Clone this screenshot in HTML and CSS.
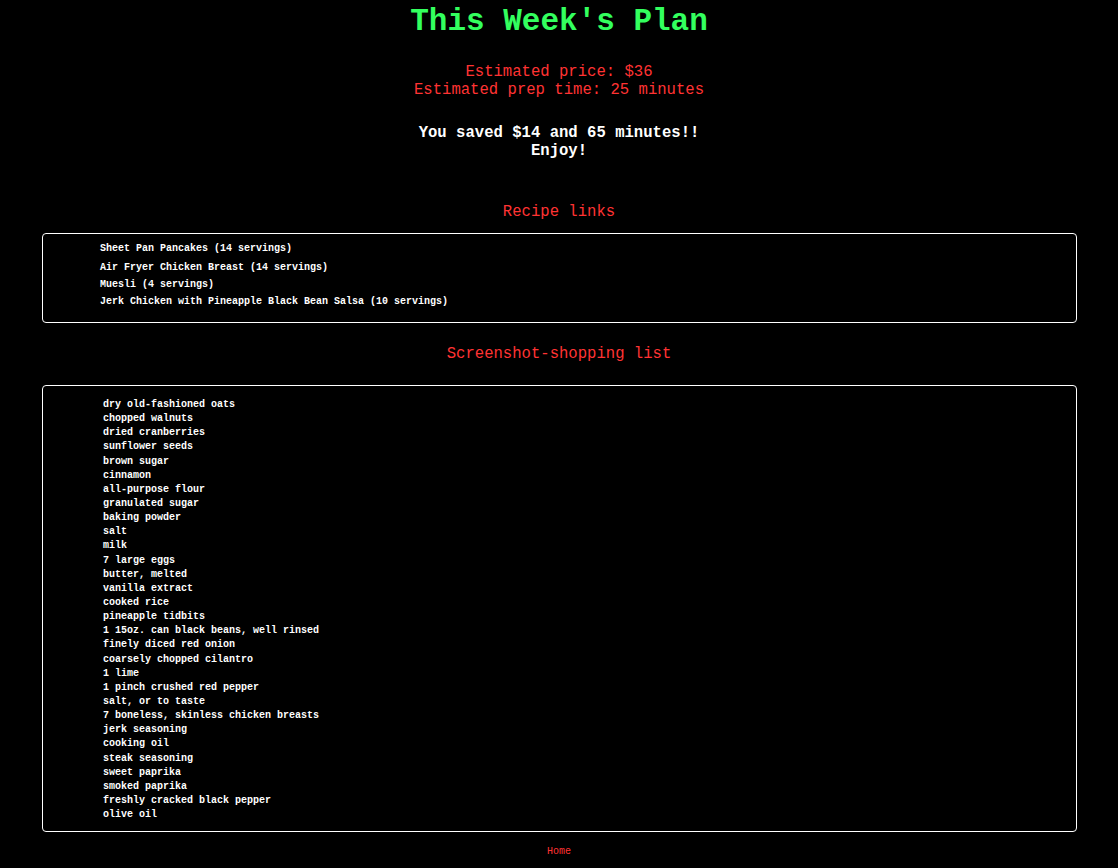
FILE: index.html
```html
<!DOCTYPE html>
<html lang="en">
<head>
<meta charset="utf-8">
<title>This Week's Plan</title>
<link rel="stylesheet" href="styles.css">
</head>
<body>
<h1 class="title">This Week's Plan</h1>
<div class="estimates">
  <div>Estimated price: $36</div>
  <div>Estimated prep time: 25 minutes</div>
</div>
<div class="saved">
  <div>You saved $14 and 65 minutes!!</div>
  <div>Enjoy!</div>
</div>
<h2 class="section-title recipes-title">Recipe links</h2>
<div class="box recipes">
  <ul class="recipe-list">
    <li><a href="#">Sheet Pan Pancakes (14 servings)</a></li>
    <li><a href="#">Air Fryer Chicken Breast (14 servings)</a></li>
    <li><a href="#">Muesli (4 servings)</a></li>
    <li><a href="#">Jerk Chicken with Pineapple Black Bean Salsa (10 servings)</a></li>
  </ul>
</div>
<h2 class="section-title shopping-title">Screenshot-shopping list</h2>
<div class="box shopping">
  <ul class="shopping-list">
    <li>dry old-fashioned oats</li>
    <li>chopped walnuts</li>
    <li>dried cranberries</li>
    <li>sunflower seeds</li>
    <li>brown sugar</li>
    <li>cinnamon</li>
    <li>all-purpose flour</li>
    <li>granulated sugar</li>
    <li>baking powder</li>
    <li>salt</li>
    <li>milk</li>
    <li>7 large eggs</li>
    <li>butter, melted</li>
    <li>vanilla extract</li>
    <li>cooked rice</li>
    <li>pineapple tidbits</li>
    <li>1 15oz. can black beans, well rinsed</li>
    <li>finely diced red onion</li>
    <li>coarsely chopped cilantro</li>
    <li>1 lime</li>
    <li>1 pinch crushed red pepper</li>
    <li>salt, or to taste</li>
    <li>7 boneless, skinless chicken breasts</li>
    <li>jerk seasoning</li>
    <li>cooking oil</li>
    <li>steak seasoning</li>
    <li>sweet paprika</li>
    <li>smoked paprika</li>
    <li>freshly cracked black pepper</li>
    <li>olive oil</li>
  </ul>
</div>
<footer class="footer"><a href="#" class="home-link">Home</a></footer>
</body>
</html>
```
FILE: styles.css
```css
html, body {
  background: #000;
}
body {
  margin: 0;
  font-family: "Liberation Mono", "Courier New", monospace;
  color: #fff;
  text-align: center;
}
.title {
  margin: 4px 0 0;
  font-size: 31px;
  line-height: 36px;
  font-weight: bold;
  color: #33ff5e;
}
.estimates {
  margin-top: 23px;
  font-size: 15.6px;
  line-height: 18px;
  color: #ff3333;
}
.saved {
  margin-top: 25px;
  font-size: 15.6px;
  line-height: 18px;
  font-weight: bold;
  color: #fff;
}
.section-title {
  margin: 0;
  font-size: 15.6px;
  line-height: 18px;
  font-weight: normal;
  color: #ff3333;
}
.recipes-title {
  margin-top: 43px;
}
.shopping-title {
  margin-top: 22px;
}
.box {
  margin: 0 41px 0 42px;
  border: 1px solid #fff;
  border-radius: 4px;
  text-align: left;
}
.recipes {
  margin-top: 12px;
  padding: 6px 0 12px 57px;
}
.shopping {
  margin-top: 22px;
  padding: 12px 0 9px 60px;
}
.recipe-list, .shopping-list {
  list-style: none;
  margin: 0;
  padding: 0;
  font-size: 10px;
  font-weight: bold;
}
.recipe-list li {
  line-height: 17px;
}
.recipe-list li:first-child {
  margin-bottom: 2px;
}
.recipe-list a {
  color: #fff;
  text-decoration: none;
}
.shopping-list li {
  line-height: 14.14px;
}
.footer {
  margin-top: 14px;
  font-size: 10px;
  line-height: 12px;
}
.home-link {
  color: #ff3333;
  text-decoration: none;
}
```
